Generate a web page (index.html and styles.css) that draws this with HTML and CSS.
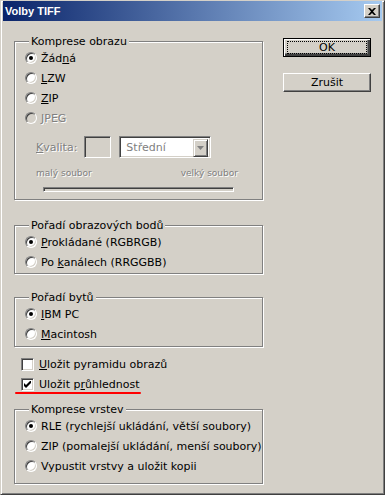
FILE: index.html
```html
<!DOCTYPE html>
<html lang="cs">
<head>
  <meta charset="UTF-8" />
  <title>Volby TIFF</title>
  <link rel="stylesheet" href="styles.css">
</head>
<body>
  <div class="window">
    <div class="titlebar">
      <span class="title">Volby TIFF</span>
      <span class="close-btn">
        <svg width="8" height="7" viewBox="0 0 8 7"><path d="M0 0h2l2 2 2-2h2L5 3.5 8 7H6L4 5 2 7H0l3-3.5z" fill="#000"/></svg>
      </span>
    </div>

    <div class="client">
      <div class="left">
        <div class="group g1">
          <div class="group-title">Komprese obrazu</div>
          <div class="opt"><span class="radio on"></span><span>Žád<u>n</u>á</span></div>
          <div class="opt"><span class="radio"></span><span><u>L</u>ZW</span></div>
          <div class="opt"><span class="radio"></span><span><u>Z</u>IP</span></div>
          <div class="opt off"><span class="radio"></span><span><u>J</u>PEG</span></div>
          <div class="quality">
            <span class="dis"><u>K</u>valita:</span>
            <span class="field"></span>
            <span class="combo">
              <span class="combo-text">Střední</span>
              <span class="combo-btn">
                <svg width="7" height="4" viewBox="0 0 7 4"><path d="M0 0h7L3.5 4z" fill="#808080"/></svg>
              </span>
            </span>
          </div>
          <div class="scale dis"><span>malý soubor</span><span>velký soubor</span></div>
          <div class="track"></div>
        </div>

        <div class="group g2">
          <div class="group-title">Pořadí obrazových bodů</div>
          <div class="opt"><span class="radio on"></span><span><u>P</u>rokládané (RGBRGB)</span></div>
          <div class="opt"><span class="radio"></span><span>Po <u>k</u>análech (RRGGBB)</span></div>
        </div>

        <div class="group g3">
          <div class="group-title">Pořadí bytů</div>
          <div class="opt"><span class="radio on"></span><span><u>I</u>BM PC</span></div>
          <div class="opt"><span class="radio"></span><span><u>M</u>acintosh</span></div>
        </div>

        <div class="checks">
          <div class="opt chk-row"><span class="check"></span><span><u>U</u>ložit pyramidu obrazů</span></div>
          <div class="opt chk-row marked">
            <span class="check">
              <svg width="7" height="7" viewBox="0 0 7 7"><path d="M0 2v3l2 2 5-5V-1L2 4z" fill="#000"/></svg>
            </span><span>Uložit p<u>r</u>ůhlednost</span>
          </div>
        </div>

        <div class="group g4">
          <div class="group-title">Komprese vrstev</div>
          <div class="opt"><span class="radio on"></span><span>RLE (rychlejší ukládání, větší soubory)</span></div>
          <div class="opt"><span class="radio"></span><span>ZIP (pomalejší ukládání, menší soubory)</span></div>
          <div class="opt"><span class="radio"></span><span>Vypustit vrstvy a uložit kopii</span></div>
        </div>
      </div>

      <div class="right">
        <button class="btn default"><span class="focus">OK</span></button>
        <button class="btn">Zrušit</button>
      </div>
    </div>
  </div>
</body>
</html>
```

FILE: styles.css
```css
* { box-sizing: border-box; margin: 0; padding: 0; }
body {
  font-family: "DejaVu Sans", sans-serif;
  font-size: 11px;
  color: #000;
  background: #D4D0C8;
}
.window {
  width: 385px;
  height: 495px;
  background: #D4D0C8;
  border-top: 1px solid #D4D0C8;
  border-left: 1px solid #D4D0C8;
  border-right: 1px solid #404040;
  border-bottom: 1px solid #404040;
  box-shadow: inset 1px 1px 0 #fff, inset -1px -1px 0 #808080;
  padding: 0 2px 2px 2px;
}
.titlebar {
  height: 20px;
  display: flex;
  align-items: center;
  justify-content: space-between;
  padding: 0 2px;
  background: linear-gradient(to right, #0A246A, #A6CAF0);
}
.title {
  font-family: "Liberation Sans", sans-serif;
  font-weight: bold;
  font-size: 11px;
  color: #fff;
}
.close-btn {
  width: 16px;
  height: 14px;
  background: #D4D0C8;
  border: 1px solid;
  border-color: #fff #404040 #404040 #fff;
  box-shadow: inset -1px -1px 0 #808080;
  display: flex;
  align-items: center;
  justify-content: center;
}
.client {
  display: flex;
}
.left {
  width: 249px;
  margin-left: 11px;
  margin-top: 20px;
}
.right {
  margin-left: 20px;
  display: flex;
  flex-direction: column;
  margin-top: 17px;
}

/* skupiny */
.group {
  border: 1px solid #808080;
  box-shadow: inset 1px 1px 0 #fff, 1px 1px 0 #fff;
  padding-left: 10px;
}
.group-title {
  width: max-content;
  margin: -7px 0 0 4px;
  padding: 0 2px;
  line-height: 13px;
  background: #D4D0C8;
}
.g1 { padding-bottom: 7px; }
.g2 { margin-top: 25px; padding-bottom: 1px; }
.g3 { margin-top: 23px; padding-bottom: 2px; }
.g4 { margin-top: 15px; padding-bottom: 7px; }

.opt {
  height: 20px;
  display: flex;
  align-items: center;
  white-space: nowrap;
}
.opt.off, .dis {
  color: #808080;
  text-shadow: 1px 1px 0 #fff;
}
.radio {
  position: relative;
  flex: none;
  width: 12px;
  height: 12px;
  margin-right: 4px;
  border-radius: 50%;
  background: #fff;
  border: 1px solid;
  border-color: #808080 #fff #fff #808080;
  box-shadow: inset 1px 1px 0 #404040, inset -1px -1px 0 #D4D0C8;
}
.opt.off .radio { background: #D4D0C8; }
.radio.on::after {
  content: "";
  position: absolute;
  left: 3px;
  top: 3px;
  width: 4px;
  height: 4px;
  border-radius: 50%;
  background: #000;
}

/* kvalita */
.quality {
  margin-top: 8px;
  height: 22px;
  display: flex;
  align-items: center;
  padding-left: 11px;
}
.field {
  width: 27px;
  height: 22px;
  margin-left: 7px;
  border: 1px solid;
  border-color: #808080 #fff #fff #808080;
  box-shadow: inset 1px 1px 0 #404040, inset -1px -1px 0 #D4D0C8;
}
.combo {
  width: 92px;
  height: 22px;
  margin-left: 8px;
  display: flex;
  background: #fff;
  border: 1px solid;
  border-color: #808080 #fff #fff #808080;
  box-shadow: inset 1px 1px 0 #404040, inset -1px -1px 0 #D4D0C8;
  padding: 2px;
}
.combo-text {
  flex: 1;
  color: #808080;
  padding-left: 4px;
  line-height: 18px;
}
.combo-btn {
  width: 15px;
  height: 18px;
  background: #D4D0C8;
  border: 1px solid;
  border-color: #D4D0C8 #404040 #404040 #D4D0C8;
  box-shadow: inset 1px 1px 0 #fff, inset -1px -1px 0 #808080;
  display: flex;
  align-items: center;
  justify-content: center;
}
.scale {
  margin-top: 9px;
  width: 213px;
  padding-left: 11px;
  display: flex;
  justify-content: space-between;
  font-size: 9px;
  line-height: 12px;
}
.track {
  margin: 8px 0 0 18px;
  width: 191px;
  height: 5px;
  border: 1px solid;
  border-color: #808080 #fff #fff #808080;
  box-shadow: inset 1px 1px 0 #404040;
}

/* zaškrtávátka */
.checks {
  margin-top: 7px;
  padding-left: 7px;
}
.check {
  flex: none;
  width: 13px;
  height: 13px;
  margin-right: 5px;
  background: #fff;
  border: 1px solid;
  border-color: #808080 #fff #fff #808080;
  box-shadow: inset 1px 1px 0 #404040, inset -1px -1px 0 #D4D0C8;
  display: flex;
  align-items: center;
  justify-content: center;
}
.chk-row.marked { position: relative; }
/* červené podtržení přes dialog */
.chk-row.marked::after {
  content: "";
  position: absolute;
  left: -6px;
  width: 126px;
  top: 18px;
  height: 2px;
  background: #F00;
  border-radius: 1px;
}

/* tlačítka */
.btn {
  width: 88px;
  height: 19px;
  font-family: "DejaVu Sans", sans-serif;
  font-size: 11px;
  color: #000;
  background: #D4D0C8;
  border: 1px solid;
  border-color: #fff #404040 #404040 #fff;
  box-shadow: inset -1px -1px 0 #808080;
  display: flex;
  align-items: center;
  justify-content: center;
  margin-bottom: 16px;
}
.btn.default {
  border: 1px solid #000;
  box-shadow: inset 1px 1px 0 #fff, inset -2px -2px 0 #404040, inset -3px -3px 0 #808080;
}
.focus {
  width: 80px;
  height: 13px;
  border: 1px dotted #000;
  display: flex;
  align-items: center;
  justify-content: center;
  line-height: 11px;
}
```
